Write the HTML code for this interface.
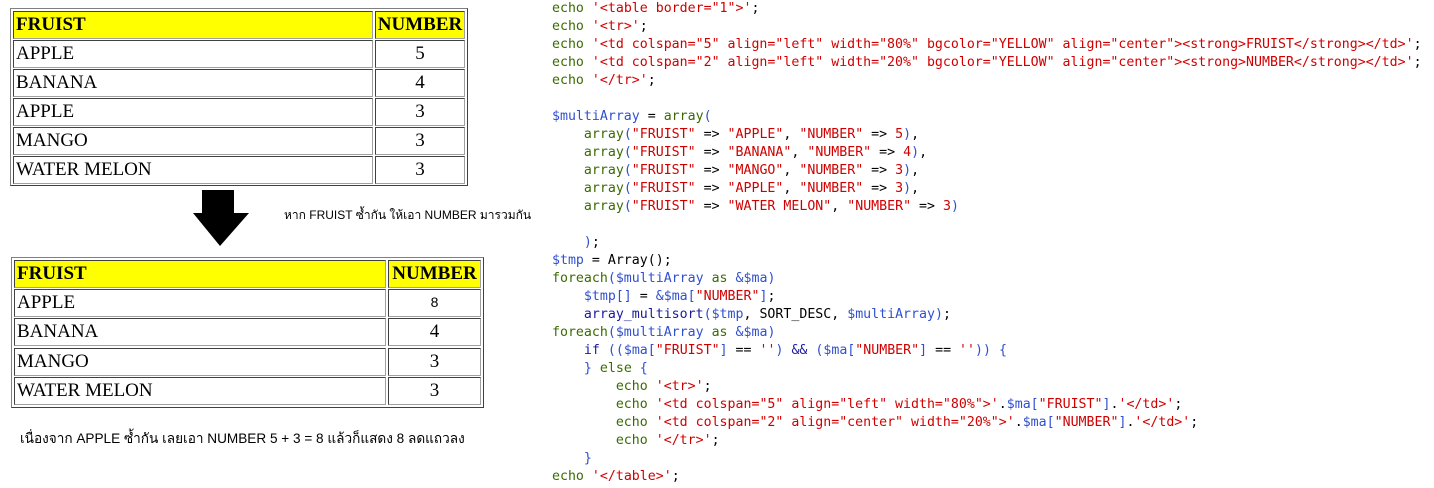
<!DOCTYPE html>
<html><head><meta charset="utf-8"><style>
body{margin:0;width:1434px;height:488px;background:#fff;position:relative;overflow:hidden}
.t{position:absolute;border:1px solid #808080;border-right-color:#404040;border-bottom-color:#404040;box-sizing:border-box}
.c{position:absolute;box-sizing:border-box;border:1px solid #404040;border-right-color:#a0a0a0;border-bottom-color:#a0a0a0;font-family:"Liberation Serif",serif;font-size:19px;line-height:25px;padding-left:2px;white-space:nowrap;color:#000}
.h{background:#ff0;font-weight:bold}
.n{text-align:center;padding:0}
.code{position:absolute;left:552px;top:0px;font-family:"DejaVu Sans Mono","Liberation Mono",monospace;font-size:13.25px;line-height:18px;white-space:pre;color:#000}
.e{color:#3a6b00}.s{color:#d00000}.v{color:#3050d0}.k{color:#1a1aa0}
.th{position:absolute;font-family:"Liberation Sans","Noto Sans CJK SC",sans-serif;font-size:12px;color:#000;white-space:nowrap}
</style></head><body>
<div class="t" style="left:10px;top:8px;width:458px;height:178px"></div>
<div class="c h" style="left:13px;top:11px;width:360px;height:28px">FRUIST</div>
<div class="c h n" style="left:375px;top:11px;width:90px;height:28px">NUMBER</div>
<div class="c" style="left:13px;top:40px;width:360px;height:28px">APPLE</div>
<div class="c n" style="left:375px;top:40px;width:90px;height:28px">5</div>
<div class="c" style="left:13px;top:69px;width:360px;height:28px">BANANA</div>
<div class="c n" style="left:375px;top:69px;width:90px;height:28px">4</div>
<div class="c" style="left:13px;top:98px;width:360px;height:28px">APPLE</div>
<div class="c n" style="left:375px;top:98px;width:90px;height:28px">3</div>
<div class="c" style="left:13px;top:127px;width:360px;height:28px">MANGO</div>
<div class="c n" style="left:375px;top:127px;width:90px;height:28px">3</div>
<div class="c" style="left:13px;top:156px;width:360px;height:28px">WATER MELON</div>
<div class="c n" style="left:375px;top:156px;width:90px;height:28px">3</div>

<svg style="position:absolute;left:186px;top:189px" width="66" height="60"><path d="M16 1H48V24H63L34 57L7 24H16Z" fill="#000"/></svg>
<div class="th" style="left:284px;top:206px">หาก FRUIST ซ้ำกัน ให้เอา NUMBER มารวมกัน</div>

<div class="t" style="left:11px;top:257px;width:473px;height:151px"></div>
<div class="c h" style="left:14px;top:260px;width:372px;height:28px">FRUIST</div>
<div class="c h n" style="left:388px;top:260px;width:93px;height:28px">NUMBER</div>
<div class="c" style="left:14px;top:289px;width:372px;height:28px">APPLE</div>
<div class="c n" style="left:388px;top:289px;width:93px;height:28px;font-family:'Liberation Sans',sans-serif;font-size:14px">8</div>
<div class="c" style="left:14px;top:318px;width:372px;height:28px">BANANA</div>
<div class="c n" style="left:388px;top:318px;width:93px;height:28px">4</div>
<div class="c" style="left:14px;top:348px;width:372px;height:28px">MANGO</div>
<div class="c n" style="left:388px;top:348px;width:93px;height:28px">3</div>
<div class="c" style="left:14px;top:377px;width:372px;height:28px">WATER MELON</div>
<div class="c n" style="left:388px;top:377px;width:93px;height:28px">3</div>
<div class="th" style="left:20px;top:427px;font-size:13.6px">เนื่องจาก APPLE ซ้ำกัน เลยเอา NUMBER 5 + 3 = 8 แล้วก็แสดง 8 ลดแถวลง</div>

<div class="code"><span class="e">echo</span> <span class="s">'&lt;table border="1"&gt;'</span>;
<span class="e">echo</span> <span class="s">'&lt;tr&gt;'</span>;
<span class="e">echo</span> <span class="s">'&lt;td colspan="5" align="left" width="80%" bgcolor="YELLOW" align="center"&gt;&lt;strong&gt;FRUIST&lt;/strong&gt;&lt;/td&gt;'</span>;
<span class="e">echo</span> <span class="s">'&lt;td colspan="2" align="left" width="20%" bgcolor="YELLOW" align="center"&gt;&lt;strong&gt;NUMBER&lt;/strong&gt;&lt;/td&gt;'</span>;
<span class="e">echo</span> <span class="s">'&lt;/tr&gt;'</span>;

<span class="v">$multiArray</span> = <span class="e">array</span><span class="v">(</span>
    <span class="e">array</span><span class="v">(</span><span class="s">"FRUIST"</span> =&gt; <span class="s">"APPLE"</span>, <span class="s">"NUMBER"</span> =&gt; <span class="s">5</span><span class="v">)</span>,
    <span class="e">array</span><span class="v">(</span><span class="s">"FRUIST"</span> =&gt; <span class="s">"BANANA"</span>, <span class="s">"NUMBER"</span> =&gt; <span class="s">4</span><span class="v">)</span>,
    <span class="e">array</span><span class="v">(</span><span class="s">"FRUIST"</span> =&gt; <span class="s">"MANGO"</span>, <span class="s">"NUMBER"</span> =&gt; <span class="s">3</span><span class="v">)</span>,
    <span class="e">array</span><span class="v">(</span><span class="s">"FRUIST"</span> =&gt; <span class="s">"APPLE"</span>, <span class="s">"NUMBER"</span> =&gt; <span class="s">3</span><span class="v">)</span>,
    <span class="e">array</span><span class="v">(</span><span class="s">"FRUIST"</span> =&gt; <span class="s">"WATER MELON"</span>, <span class="s">"NUMBER"</span> =&gt; <span class="s">3</span><span class="v">)</span>

    <span class="v">)</span>;
<span class="v">$tmp</span> = Array();
<span class="e">foreach</span><span class="v">(</span><span class="v">$multiArray</span> <span class="e">as</span> <span class="v">&amp;$ma</span><span class="v">)</span>
    <span class="v">$tmp[]</span> = <span class="v">&amp;$ma[</span><span class="s">"NUMBER"</span><span class="v">]</span>;
    <span class="k">array_multisort</span><span class="v">(</span><span class="v">$tmp</span>, SORT_DESC, <span class="v">$multiArray</span><span class="v">)</span>;
<span class="e">foreach</span><span class="v">(</span><span class="v">$multiArray</span> <span class="e">as</span> <span class="v">&amp;$ma</span><span class="v">)</span>
    <span class="k">if</span> <span class="v">((</span><span class="v">$ma[</span><span class="s">"FRUIST"</span><span class="v">]</span> == <span class="s">''</span><span class="v">)</span> <span class="k">&amp;&amp;</span> <span class="v">(</span><span class="v">$ma[</span><span class="s">"NUMBER"</span><span class="v">]</span> == <span class="s">''</span><span class="v">))</span> <span class="v">{</span>
    <span class="v">}</span> <span class="e">else</span> <span class="v">{</span>
        <span class="e">echo</span> <span class="s">'&lt;tr&gt;'</span>;
        <span class="e">echo</span> <span class="s">'&lt;td colspan="5" align="left" width="80%"&gt;'</span>.<span class="v">$ma[</span><span class="s">"FRUIST"</span><span class="v">]</span>.<span class="s">'&lt;/td&gt;'</span>;
        <span class="e">echo</span> <span class="s">'&lt;td colspan="2" align="center" width="20%"&gt;'</span>.<span class="v">$ma[</span><span class="s">"NUMBER"</span><span class="v">]</span>.<span class="s">'&lt;/td&gt;'</span>;
        <span class="e">echo</span> <span class="s">'&lt;/tr&gt;'</span>;
    <span class="v">}</span>
<span class="e">echo</span> <span class="s">'&lt;/table&gt;'</span>;</div>
</body></html>
